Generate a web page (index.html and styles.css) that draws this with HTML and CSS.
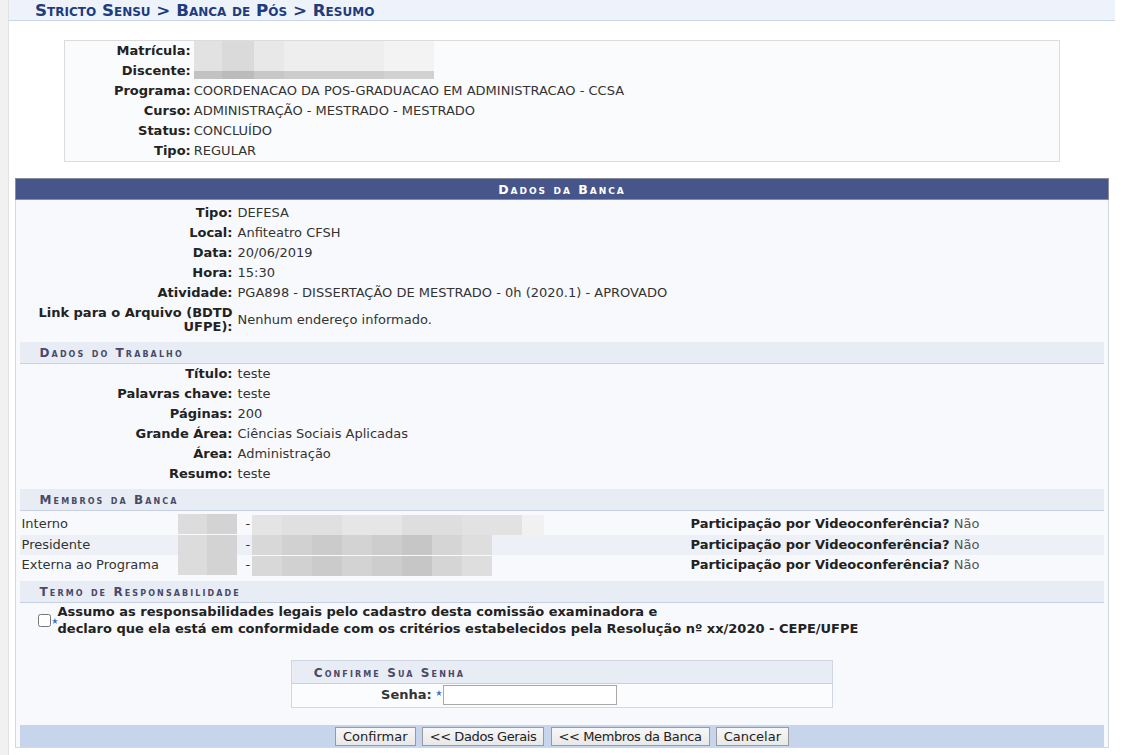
FILE: index.html
```html
<!DOCTYPE html>
<html lang="pt-BR">
<head>
    <meta charset="UTF-8">
    <title>SIGAA - Banca de Pós - Resumo</title>
    <link rel="stylesheet" href="styles.css">
</head>
<body>
<div id="conteudo">
    <h2 class="titulo">Stricto Sensu &gt; Banca de Pós &gt; Resumo</h2>

    <table class="visualizacao">
        <tr><th>Matrícula:</th><td><span class="blur blur-mat"></span></td></tr>
        <tr><th>Discente:</th><td><span class="blur blur-disc"></span></td></tr>
        <tr><th>Programa:</th><td>COORDENACAO DA POS-GRADUACAO EM ADMINISTRACAO - CCSA</td></tr>
        <tr><th>Curso:</th><td>ADMINISTRAÇÃO - MESTRADO - MESTRADO</td></tr>
        <tr><th>Status:</th><td>CONCLUÍDO</td></tr>
        <tr><th>Tipo:</th><td>REGULAR</td></tr>
    </table>

    <table class="formulario">
        <caption>Dados da Banca</caption>
        <tbody>
            <tr class="primeira"><th>Tipo:</th><td>DEFESA</td></tr>
            <tr><th>Local:</th><td>Anfiteatro CFSH</td></tr>
            <tr><th>Data:</th><td>20/06/2019</td></tr>
            <tr><th>Hora:</th><td>15:30</td></tr>
            <tr><th>Atividade:</th><td>PGA898 - DISSERTAÇÃO DE MESTRADO - 0h (2020.1) - APROVADO</td></tr>
            <tr><th>Link para o Arquivo (BDTD UFPE):</th><td>Nenhum endereço informado.</td></tr>

            <tr><td colspan="2" class="subFormulario">Dados do Trabalho</td></tr>
            <tr><th>Título:</th><td>teste</td></tr>
            <tr><th>Palavras chave:</th><td>teste</td></tr>
            <tr><th>Páginas:</th><td>200</td></tr>
            <tr><th>Grande Área:</th><td>Ciências Sociais Aplicadas</td></tr>
            <tr><th>Área:</th><td>Administração</td></tr>
            <tr><th>Resumo:</th><td>teste</td></tr>

            <tr><td colspan="2" class="subFormulario">Membros da Banca</td></tr>
            <tr>
                <td colspan="2" class="sem-padding">
                    <table class="membros">
                        <tr>
                            <td class="papel">Interno</td>
                            <td class="codigo"><span class="blur blur-cod"></span></td>
                            <td class="nome">-<span class="blur blur-nome1"></span></td>
                            <td class="participacao"><b>Participação por Videoconferência?</b> <span class="nao">Não</span></td>
                        </tr>
                        <tr class="par">
                            <td class="papel">Presidente</td>
                            <td class="codigo"><span class="blur blur-cod"></span></td>
                            <td class="nome">-<span class="blur blur-nome2"></span></td>
                            <td class="participacao"><b>Participação por Videoconferência?</b> <span class="nao">Não</span></td>
                        </tr>
                        <tr>
                            <td class="papel">Externa ao Programa</td>
                            <td class="codigo"><span class="blur blur-cod"></span></td>
                            <td class="nome">-<span class="blur blur-nome2"></span></td>
                            <td class="participacao"><b>Participação por Videoconferência?</b> <span class="nao">Não</span></td>
                        </tr>
                    </table>
                </td>
            </tr>

            <tr><td colspan="2" class="subFormulario">Termo de Responsabilidade</td></tr>
            <tr>
                <td colspan="2" class="termo">
                    <div class="termo-linha">
                        <input type="checkbox" id="termo">
                        <svg class="obrigatorio" width="6" height="6" viewBox="0 0 6 6"><path d="M3 0 L3.8 2.2 L6 2.2 L4.2 3.6 L4.9 6 L3 4.5 L1.1 6 L1.8 3.6 L0 2.2 L2.2 2.2 Z" fill="#3b6fd1"/></svg>
                        <label for="termo">Assumo as responsabilidades legais pelo cadastro desta comissão examinadora e<br>declaro que ela está em conformidade com os critérios estabelecidos pela Resolução nº xx/2020 - CEPE/UFPE</label>
                    </div>
                </td>
            </tr>

            <tr>
                <td colspan="2" class="area-senha">
                    <table class="senha">
                        <tr><td colspan="2" class="subFormulario">Confirme Sua Senha</td></tr>
                        <tr>
                            <th>Senha: <svg class="obrigatorio" width="6" height="6" viewBox="0 0 6 6"><path d="M3 0 L3.8 2.2 L6 2.2 L4.2 3.6 L4.9 6 L3 4.5 L1.1 6 L1.8 3.6 L0 2.2 L2.2 2.2 Z" fill="#3b6fd1"/></svg></th>
                            <td><input type="password" class="campo-senha"></td>
                        </tr>
                    </table>
                </td>
            </tr>
        </tbody>
        <tfoot>
            <tr>
                <td colspan="2">
                    <input type="button" value="Confirmar">
                    <input type="button" class="voltar" value="&lt;&lt; Dados Gerais">
                    <input type="button" class="voltar" value="&lt;&lt; Membros da Banca">
                    <input type="button" value="Cancelar">
                </td>
            </tr>
        </tfoot>
    </table>
</div>
</body>
</html>
```

FILE: styles.css
```css
html {
    background: #f1f1f1;
}

body {
    margin: 0 0 0 8px;
    min-height: 755px;
    background: #fff;
    border-left: 1px solid #e2e2e2;
    font-family: "DejaVu Sans", Verdana, sans-serif;
    font-size: 13px;
    color: #222;
}

#conteudo {
    margin-right: 6px;
}

h2.titulo {
    margin: 0;
    padding: 2px 26px 2px;
    height: 16px;
    line-height: 17px;
    background: #eef3fb;
    border-bottom: 1px solid #c9d5e8;
    color: #1f3c7c;
    font-size: 16.7px;
    font-weight: bold;
    font-variant: small-caps;
}

/* caixa de dados do discente */
table.visualizacao {
    width: 90%;
    margin: 19px auto 16px;
    border: 1px solid #dcdcdc;
    border-collapse: collapse;
    background: #fafbfd;
}

table.visualizacao th,
table.visualizacao td {
    padding: 3px 0 3px 3px;
    line-height: 14px;
    height: 14px;
}

table.visualizacao th {
    box-sizing: border-box;
    width: 126px;
    text-align: right;
    white-space: nowrap;
    padding-right: 0;
}

table.visualizacao td {
    color: #333;
}

/* formulario principal */
table.formulario {
    width: 99%;
    margin: 0 auto;
    border: 1px solid #d4d8e0;
    border-top: none;
    border-collapse: separate;
    border-spacing: 4px 0;
    background: #f8f9fc;
}

table.formulario caption {
    background: #46568a;
    border: 1px solid #8a8e9c;
    color: #fff;
    font-size: 12.5px;
    font-weight: bold;
    font-variant: small-caps;
    letter-spacing: 2px;
    height: 20px;
    line-height: 21px;
    text-align: center;
}

table.formulario th,
table.formulario td {
    padding: 3px;
    line-height: 14px;
    vertical-align: middle;
}

table.formulario > tbody > tr > th {
    box-sizing: border-box;
    width: 214px;
    text-align: right;
    padding-right: 1px;
}

table.formulario > tbody > tr > td {
    color: #333;
    padding-left: 0;
}

table.formulario tr.primeira th,
table.formulario tr.primeira td {
    padding-top: 6px;
}

td.subFormulario {
    background: #e8edf5 !important;
    background-clip: padding-box !important;
    border-top: 5px solid transparent;
    border-bottom: 1px solid #c8d1e2;
    padding: 4px 0 3px 20px !important;
    color: #4a4a68 !important;
    font-size: 12px;
    font-weight: bold;
    font-variant: small-caps;
    letter-spacing: 2.1px;
}

td.sem-padding {
    padding: 0 !important;
}

/* membros da banca */
table.membros {
    width: 100%;
    margin: 3px 0 0;
    border-collapse: collapse;
}

table.membros td {
    padding: 3px 2px;
    line-height: 14px;
    white-space: nowrap;
}

table.membros tr.par td {
    background: #edf1f7;
}

td.papel {
    box-sizing: border-box;
    width: 158px;
}

td.codigo {
    box-sizing: border-box;
    width: 68px;
    padding: 0 !important;
}

table.membros td.nome {
    box-sizing: border-box;
    width: 443px;
    padding-left: 0;
}

td.participacao b {
    color: #222;
}

.nao {
    color: #555;
}

/* blocos borrados (dados ocultos) */
.blur {
    display: block;
    height: 20px;
}

.blur-mat {
    width: 240px;
    margin: -3px 0;
    background: linear-gradient(90deg, #e2e2e2 0 28px, #dadada 28px 60px, #e8e8e8 60px 90px, #eeeeee 90px 190px, #f3f3f3 190px 240px);
}

.blur-disc {
    width: 240px;
    margin: -3px 0;
    background:
        linear-gradient(180deg, transparent 0 10px, rgba(0, 0, 0, 0.14) 10px 18px, #fafbfd 18px),
        linear-gradient(90deg, #e2e2e2 0 28px, #dadada 28px 60px, #e8e8e8 60px 90px, #eeeeee 90px 190px, #f3f3f3 190px 240px);
}

.blur-cod {
    width: 59px;
    background: linear-gradient(90deg, #dcdcdc 0 29px, #d3d3d3 29px 59px);
}

.blur.blur-nome1,
.blur.blur-nome2 {
    display: inline-block;
    vertical-align: middle;
    margin: -3px 0 -3px 2px;
}

.blur-nome1 {
    width: 292px;
    background: linear-gradient(90deg, #e4e4e4 0 30px, #e0e0e0 30px 90px, #e6e6e6 90px 150px, #dedede 150px 210px, #e2e2e2 210px 270px, #f1f1f1 270px 292px);
}

.blur-nome2 {
    width: 240px;
    background: linear-gradient(90deg, #d8d8d8 0 30px, #d1d1d1 30px 60px, #cbcbcb 60px 90px, #d3d3d3 90px 120px, #cdcdcd 120px 150px, #c6c6c6 150px 180px, #d5d5d5 180px 210px, #dedede 210px 240px);
}

/* termo de responsabilidade */
td.termo {
    padding: 0 0 0 18px !important;
    color: #222 !important;
    font-weight: bold;
    white-space: nowrap;
}

.termo-linha {
    display: flex;
    align-items: center;
}

.termo-linha input {
    width: 13px;
    height: 13px;
    margin: 2px 1px 0 0;
}

.termo-linha label {
    line-height: 17px;
    margin-left: 0;
}

svg.obrigatorio {
    vertical-align: 3px;
}

.termo-linha svg.obrigatorio {
    margin-top: 2px;
}

/* confirmar senha */
td.area-senha {
    padding: 23px 0 17px !important;
}

table.senha {
    width: 50%;
    margin: 0 auto;
    border: 1px solid #d0d7e3;
    border-collapse: collapse;
    background: #fbfcfe;
}

table.senha td.subFormulario {
    border-top: none;
    padding: 5px 0 3px 22px !important;
}

table.senha th {
    box-sizing: border-box;
    width: 151px;
    text-align: right;
    padding: 1px 0 2px 0;
    white-space: nowrap;
}

table.senha td {
    padding: 1px 0 2px 1px;
}

.campo-senha {
    box-sizing: border-box;
    width: 174px;
    height: 20px;
    margin: 0;
    border: 1px solid #a8a8a8;
    background: #fff;
    vertical-align: middle;
}

/* barra de botoes */
table.formulario tfoot td {
    background: #c6d4ec;
    text-align: center;
    padding: 2px 0 1px;
}

table.formulario tfoot input {
    font-family: "DejaVu Sans", Verdana, sans-serif;
    font-size: 13px;
    color: #222;
    height: 19px;
    padding: 0 7px;
    margin: 0 1px;
    border: 1px solid #9a9a9a;
    background: linear-gradient(#f7f7f7, #e8e8e8);
    vertical-align: middle;
}

table.formulario tfoot input.voltar {
    letter-spacing: -0.4px;
}
```
